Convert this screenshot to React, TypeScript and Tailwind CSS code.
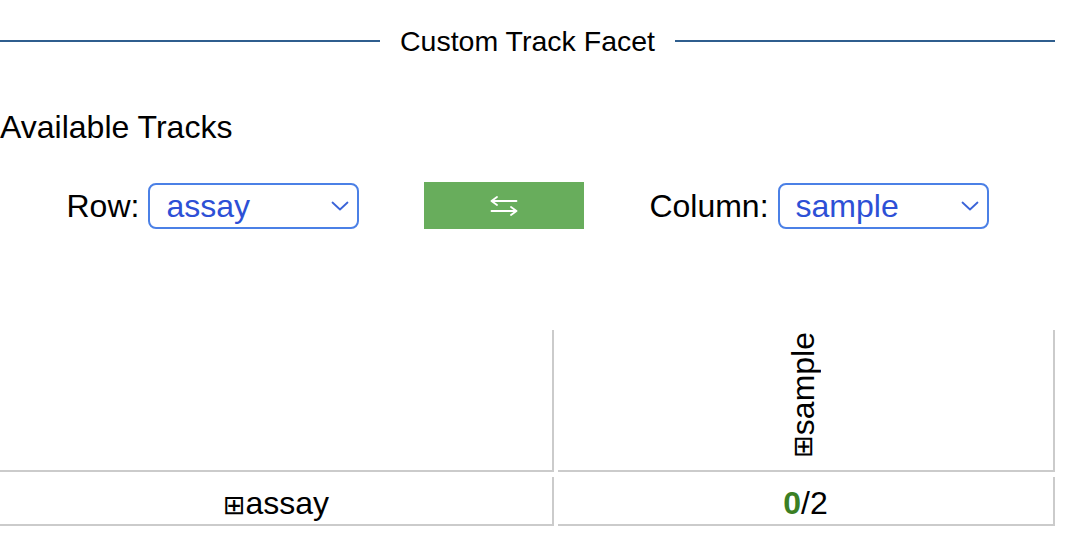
import { useState } from "react";

const Chevron = () => (
  <svg width="18" height="10" viewBox="0 0 18 10" fill="none" className="shrink-0">
    <path d="M1.5 1.5L9 8.5L16.5 1.5" stroke="#3b64d8" strokeWidth="1.8" strokeLinecap="round" strokeLinejoin="round" />
  </svg>
);

const FakeSelect = ({ value, width }: { value: string; width: string }) => (
  <div
    className={`${width} h-[46px] flex items-center justify-between pl-[16px] pr-[8px] border-2 border-[#4b80e6] rounded-[8px] bg-white text-[#2d50d6]`}
  >
    <span className="leading-none">{value}</span>
    <Chevron />
  </div>
);

const SwapIcon = () => (
  <svg width="28" height="20" viewBox="0 0 28 20" fill="none">
    <path d="M1.5 5H26.5M1.5 5L7 1M1.5 5L7 9" stroke="white" strokeWidth="1.8" strokeLinecap="round" strokeLinejoin="round" />
    <path d="M1.5 15H26.5M26.5 15L21 11M26.5 15L21 19" stroke="white" strokeWidth="1.8" strokeLinecap="round" strokeLinejoin="round" />
  </svg>
);

export default function App() {
  const [row] = useState("assay");
  const [col] = useState("sample");

  return (
    <div className="w-[1055px] bg-white text-black font-['Liberation_Sans',Arial,sans-serif]">
      <div className="flex items-center gap-5 mt-[25px] h-8">
        <div className="flex-1 h-[2px] bg-[#2f5e8e]" />
        <span className="text-[28.5px] leading-8">Custom Track Facet</span>
        <div className="flex-1 h-[2px] bg-[#2f5e8e]" />
      </div>

      <h2 className="mt-[52px] text-[32px] leading-[36px] font-normal">Available Tracks</h2>

      <div className="mt-[37px] flex items-center justify-center gap-[65px] text-[32px] h-[47px]">
        <div className="flex items-center gap-[9px]">
          <span className="leading-none">Row:</span>
          <FakeSelect value={row} width="w-[211px]" />
        </div>
        <button className="w-[160px] h-[47px] bg-[#68ad5c] flex items-center justify-center">
          <SwapIcon />
        </button>
        <div className="flex items-center gap-[9px]">
          <span className="leading-none">Column:</span>
          <FakeSelect value={col} width="w-[211px]" />
        </div>
      </div>

      <div className="mt-[101px] grid grid-cols-[554px_497px] gap-x-[4px] gap-y-[5px] text-[32px]">
        <div className="h-[142px] border-r-2 border-b-2 border-[#cbcbcb]" />
        <div className="h-[142px] border-r-2 border-b-2 border-[#cbcbcb] flex items-end justify-center pb-[12px]">
          <span className="[writing-mode:vertical-rl] rotate-180 leading-[36px] mr-[5px]">
            <span className="font-['DejaVu_Sans'] text-[27px]">⊞</span>sample
          </span>
        </div>
        <div className="h-[49px] border-r-2 border-b-2 border-[#cbcbcb] pt-[8px] text-center leading-[36px]">
          <span className="font-['DejaVu_Sans'] text-[27px]">⊞</span>assay
        </div>
        <div className="h-[49px] border-r-2 border-b-2 border-[#cbcbcb] pt-[8px] text-center leading-[36px]">
          <span className="font-bold text-[#3b7f24]">0</span>/2
        </div>
      </div>
    </div>
  );
}
